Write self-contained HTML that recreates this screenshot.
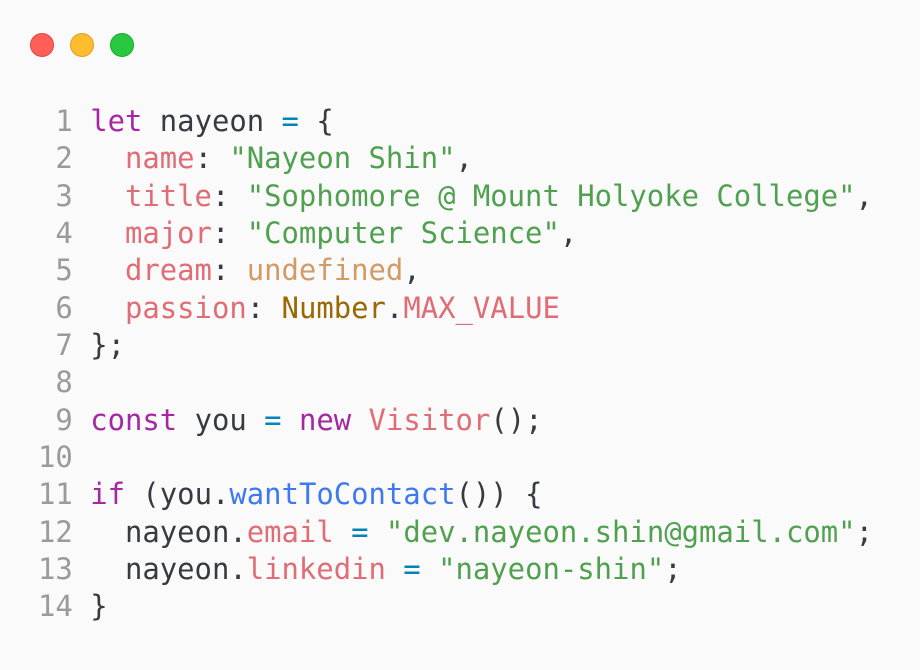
<!DOCTYPE html>
<html><head><style>
html,body{margin:0;padding:0;background:#fafafa;width:920px;height:670px;overflow:hidden}
.d{position:absolute;top:33px;width:24px;height:24px;border-radius:50%}
pre{position:absolute;left:38px;top:103px;margin:0;font-family:"DejaVu Sans Mono","Liberation Mono",monospace;font-size:28.9px;line-height:37.35px;color:#383a42}
.n{color:#9a9a9a}.k{color:#a626a4}.o{color:#0184bc}.p{color:#e06c75}.s{color:#50a14f}.u{color:#d19a66}.c{color:#986801}.f{color:#4078f2}
</style></head><body>
<div class="d" style="left:30px;background:#ff5f57;border:1px solid #e0443e;box-sizing:border-box"></div>
<div class="d" style="left:70px;background:#febc2e;border:1px solid #dea123;box-sizing:border-box"></div>
<div class="d" style="left:110px;background:#28c840;border:1px solid #1aab29;box-sizing:border-box"></div>
<pre><span class="n"> 1</span> <span class="k">let</span> nayeon <span class="o">=</span> {
<span class="n"> 2</span>   <span class="p">name</span>: <span class="s">"Nayeon Shin"</span>,
<span class="n"> 3</span>   <span class="p">title</span>: <span class="s">"Sophomore @ Mount Holyoke College"</span>,
<span class="n"> 4</span>   <span class="p">major</span>: <span class="s">"Computer Science"</span>,
<span class="n"> 5</span>   <span class="p">dream</span>: <span class="u">undefined</span>,
<span class="n"> 6</span>   <span class="p">passion</span>: <span class="c">Number</span>.<span class="p">MAX_VALUE</span>
<span class="n"> 7</span> };
<span class="n"> 8</span>
<span class="n"> 9</span> <span class="k">const</span> you <span class="o">=</span> <span class="k">new</span> <span class="p">Visitor</span>();
<span class="n">10</span>
<span class="n">11</span> <span class="k">if</span> (you.<span class="f">wantToContact</span>()) {
<span class="n">12</span>   nayeon.<span class="p">email</span> <span class="o">=</span> <span class="s">"dev.nayeon.shin@gmail.com"</span>;
<span class="n">13</span>   nayeon.<span class="p">linkedin</span> <span class="o">=</span> <span class="s">"nayeon-shin"</span>;
<span class="n">14</span> }</pre>
</body></html>
